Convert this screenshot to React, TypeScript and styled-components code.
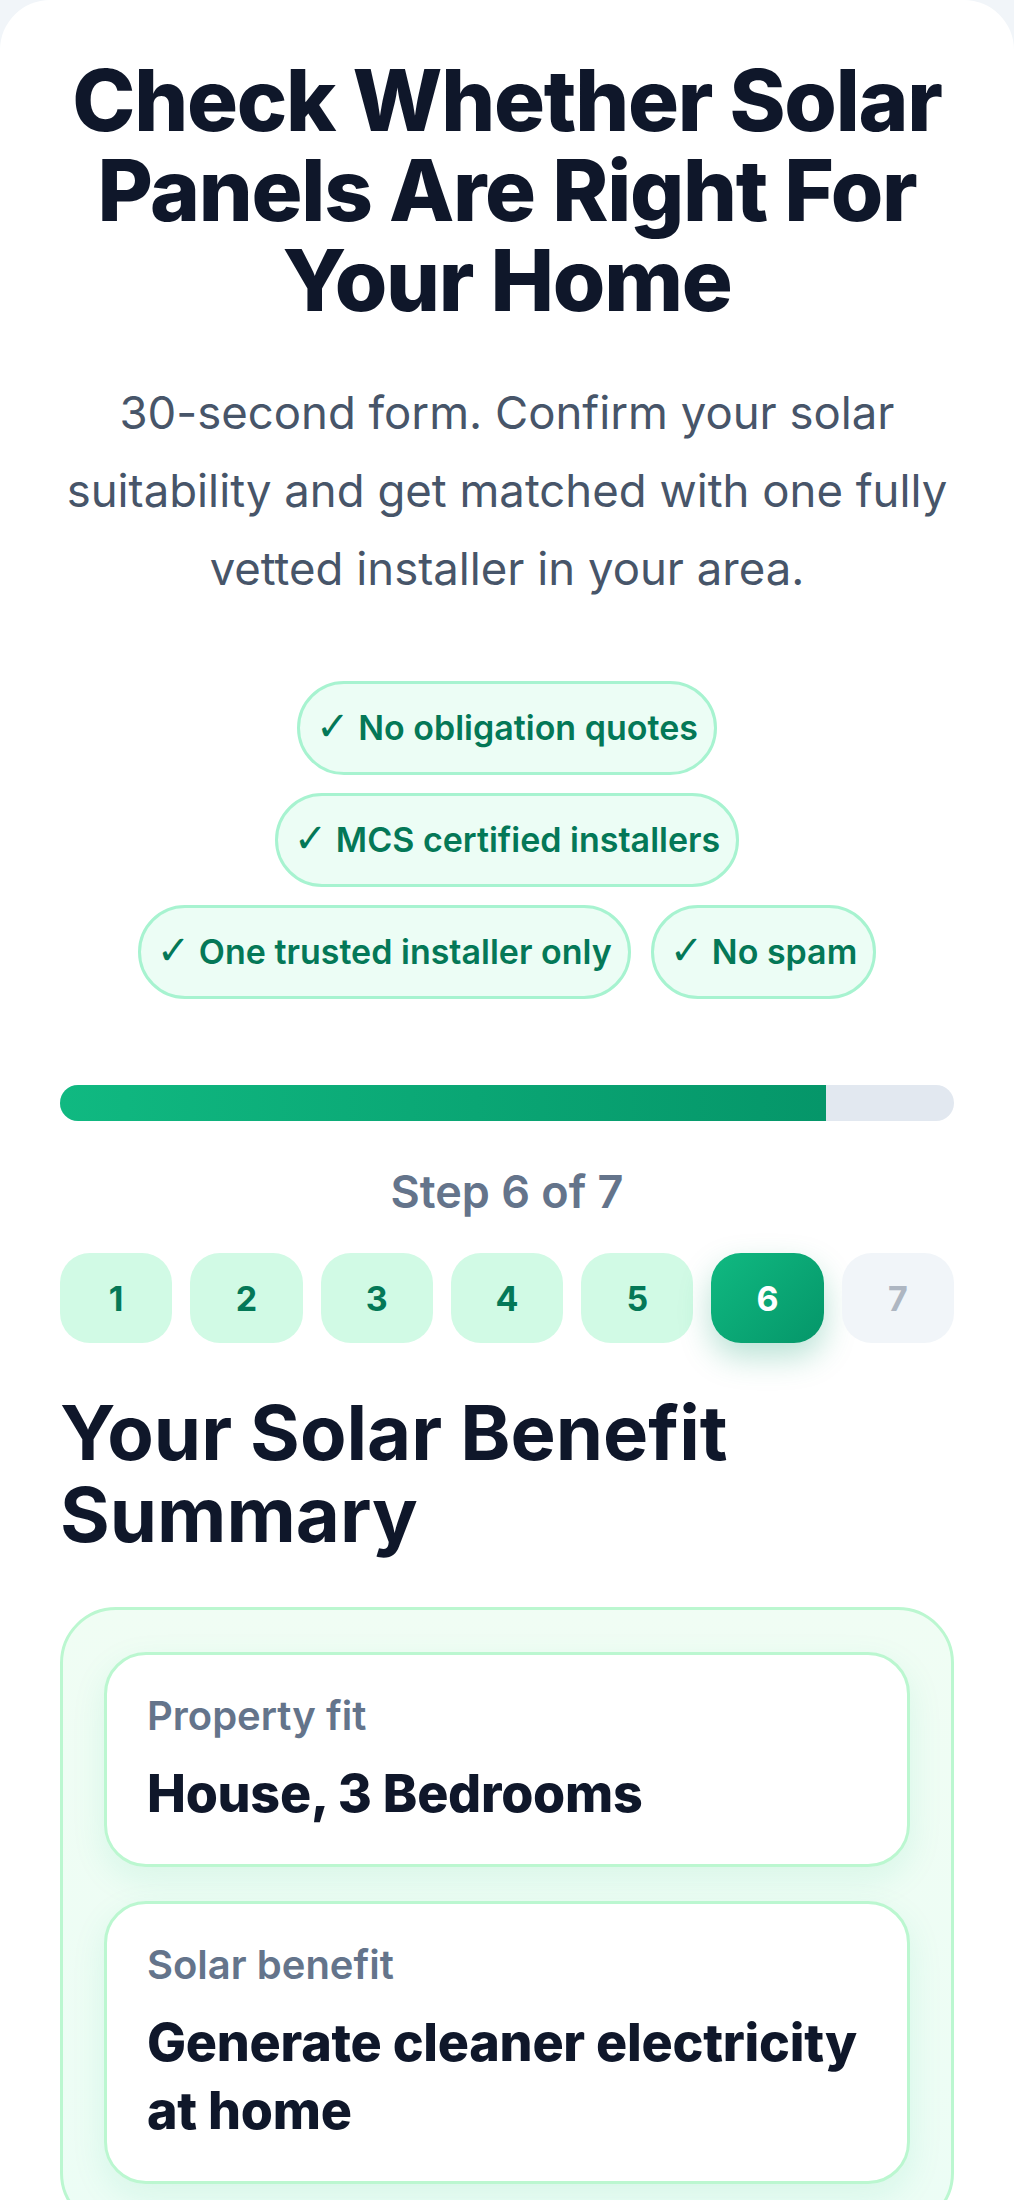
import { FC } from "react";
import styled, { createGlobalStyle } from "styled-components";

const GlobalStyle = createGlobalStyle`
  * {
    box-sizing: border-box;
  }

  body {
    margin: 0;
    background: #f1f5f9;
    font-family: "Inter", "Noto Sans", sans-serif;
    color: #0f172a;
  }
`;

const badges = [
  "No obligation quotes",
  "MCS certified installers",
  "One trusted installer only",
  "No spam",
];

const summary = [
  { label: "Property fit", value: "House, 3 Bedrooms" },
  { label: "Solar benefit", value: "Generate cleaner electricity at home" },
];

const TOTAL_STEPS = 7;
const CURRENT_STEP = 6;

const App: FC = () => {
  const steps = Array.from({ length: TOTAL_STEPS }, (_, i) => i + 1);

  return (
    <>
      <GlobalStyle />
      <Card>
        <Hero>
          <Title>Check Whether Solar Panels Are Right For Your Home</Title>
          <Subtitle>
            30-second form. Confirm your solar suitability and get matched with
            one fully vetted installer in your area.
          </Subtitle>
          <Badges>
            {badges.map((b) => (
              <Badge key={b}>
                <Tick>✓</Tick> {b}
              </Badge>
            ))}
          </Badges>
        </Hero>

        <Progress>
          <ProgressFill style={{ width: `${(CURRENT_STEP / TOTAL_STEPS) * 100}%` }} />
        </Progress>
        <StepLabel>
          Step {CURRENT_STEP} of {TOTAL_STEPS}
        </StepLabel>
        <StepList>
          {steps.map((n) => (
            <StepButton
              key={n}
              $state={n < CURRENT_STEP ? "done" : n === CURRENT_STEP ? "active" : "todo"}
            >
              {n}
            </StepButton>
          ))}
        </StepList>

        <SummaryTitle>Your Solar Benefit Summary</SummaryTitle>
        <SummaryPanel>
          {summary.map((item) => (
            <SummaryItem key={item.label}>
              <ItemLabel>{item.label}</ItemLabel>
              <ItemValue>{item.value}</ItemValue>
            </SummaryItem>
          ))}
        </SummaryPanel>
      </Card>
    </>
  );
};

const Card = styled.main`
  background: #ffffff;
  border-radius: 50px 50px 0 0;
  padding: 56px 60px 60px;
  min-height: 2200px;
`;

const Hero = styled.section`
  display: flex;
  flex-direction: column;
  align-items: center;
  text-align: center;
`;

const Title = styled.h1`
  margin: 0 0 48px;
  font-size: 85px;
  line-height: 90px;
  font-weight: 800;
  letter-spacing: -0.015em;
  color: #0f172a;
`;

const Subtitle = styled.p`
  margin: 0 0 73px;
  font-size: 45.5px;
  line-height: 78px;
  font-weight: 400;
  color: #475569;
`;

const Badges = styled.div`
  max-width: 800px;
  display: flex;
  flex-wrap: wrap;
  justify-content: center;
  gap: 18px 20px;
`;

const Badge = styled.span`
  display: inline-block;
  padding: 19px 16px;
  font-size: 34px;
  line-height: 50px;
  font-weight: 600;
  color: #047857;
  background: #ecfdf5;
  border: 3px solid #a7f3d0;
  border-radius: 999px;
  white-space: nowrap;
`;

const Tick = styled.span`
  font-family: "DejaVu Sans", sans-serif;
  font-weight: 700;
  font-size: 40px;
  line-height: 1;
`;

const Progress = styled.div`
  margin-top: 86px;
  height: 36px;
  background: #e2e8f0;
  border-radius: 999px;
  overflow: hidden;
`;

const ProgressFill = styled.div`
  height: 100%;
  background: linear-gradient(90deg, #10b981, #059669);
`;

const StepLabel = styled.p`
  margin: 39px 0 30px;
  text-align: center;
  font-size: 45px;
  line-height: 63px;
  font-weight: 600;
  color: #64748b;
`;

const StepList = styled.div`
  display: grid;
  grid-template-columns: repeat(7, 1fr);
  gap: 18px;
`;

const StepButton = styled.div<{ $state: "done" | "active" | "todo" }>`
  height: 90px;
  display: flex;
  align-items: center;
  justify-content: center;
  border-radius: 30px;
  font-size: 34px;
  font-weight: 700;
  color: ${(p) =>
    p.$state === "active" ? "#ffffff" : p.$state === "done" ? "#047857" : "#aeb6c2"};
  background: ${(p) =>
    p.$state === "active"
      ? "linear-gradient(135deg, #10b981, #059669)"
      : p.$state === "done"
      ? "#d1fae5"
      : "#f1f5f9"};
  box-shadow: ${(p) =>
    p.$state === "active" ? "0 14px 32px rgba(5, 150, 105, 0.28)" : "none"};
`;

const SummaryTitle = styled.h2`
  margin: 48px 0 52px;
  font-size: 76px;
  line-height: 82px;
  font-weight: 700;
  letter-spacing: 0;
  color: #0f172a;
`;

const SummaryPanel = styled.section`
  display: flex;
  flex-direction: column;
  gap: 34px;
  padding: 42px 41px;
  border: 3px solid #bbf7d0;
  border-radius: 56px;
  background: linear-gradient(180deg, #f0fdf4, #ecfdf5);
`;

const SummaryItem = styled.div`
  padding: 36px 40px;
  background: #ffffff;
  border: 3px solid #bbf7d0;
  border-radius: 42px;
  box-shadow: 0 12px 34px rgba(16, 185, 129, 0.1);
`;

const ItemLabel = styled.div`
  margin-bottom: 20px;
  font-size: 40px;
  line-height: 49px;
  font-weight: 600;
  color: #64748b;
`;

const ItemValue = styled.div`
  font-size: 52px;
  line-height: 68px;
  font-weight: 800;
  letter-spacing: -0.005em;
  color: #0f172a;
`;

export default App;
